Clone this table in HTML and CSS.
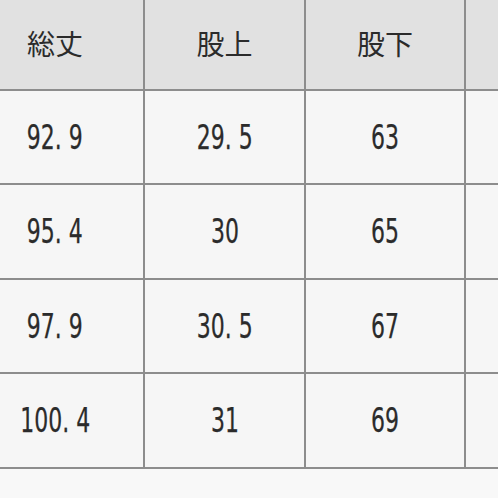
FILE: index.html
```html
<!DOCTYPE html>
<html lang="ja">
<head>
<meta charset="utf-8">
<title>サイズ表</title>
<link rel="stylesheet" href="styles.css">
</head>
<body>
<div class="sheet">
  <div class="grid">
    <div class="cell head">総丈</div>
    <div class="cell head">股上</div>
    <div class="cell head">股下</div>
    <div class="cell head last"></div>

    <div class="cell num"><span class="val">92. 9</span></div>
    <div class="cell num"><span class="val">29. 5</span></div>
    <div class="cell num"><span class="val">63</span></div>
    <div class="cell num last"></div>

    <div class="cell num"><span class="val">95. 4</span></div>
    <div class="cell num"><span class="val">30</span></div>
    <div class="cell num"><span class="val">65</span></div>
    <div class="cell num last"></div>

    <div class="cell num"><span class="val">97. 9</span></div>
    <div class="cell num"><span class="val">30. 5</span></div>
    <div class="cell num"><span class="val">67</span></div>
    <div class="cell num last"></div>

    <div class="cell num"><span class="val">100. 4</span></div>
    <div class="cell num"><span class="val">31</span></div>
    <div class="cell num"><span class="val">69</span></div>
    <div class="cell num last"></div>
  </div>
</div>
</body>
</html>
```
FILE: styles.css
```css
html, body {
  margin: 0;
  padding: 0;
  background: #f8f8f8;
  overflow: hidden;
}

.sheet {
  width: 498px;
  height: 498px;
  overflow: hidden;
}

.grid {
  display: grid;
  grid-template-columns: 178px 161px 160px 100px;
  grid-template-rows: 91px 94px 95px 94px 95px;
  margin-left: -33px;
  color: #2b2b2b;
}

.cell {
  box-sizing: border-box;
  border-right: 2px solid #8d8d8d;
  border-bottom: 2px solid #8d8d8d;
  display: flex;
  align-items: center;
  justify-content: center;
  background: #f6f6f6;
}

.head {
  background: #e1e1e1;
  font-family: "Noto Sans CJK JP", "Noto Sans", sans-serif;
  font-size: 28px;
  padding-bottom: 4px;
}

.num {
  font-family: "DejaVu Sans Condensed", "DejaVu Sans", sans-serif;
  font-size: 33px;
}

.val {
  display: inline-block;
  white-space: pre;
  transform: scaleX(0.74);
  -webkit-text-stroke: 0.25px #2b2b2b;
}

.last {
  border-right: none;
}
```
